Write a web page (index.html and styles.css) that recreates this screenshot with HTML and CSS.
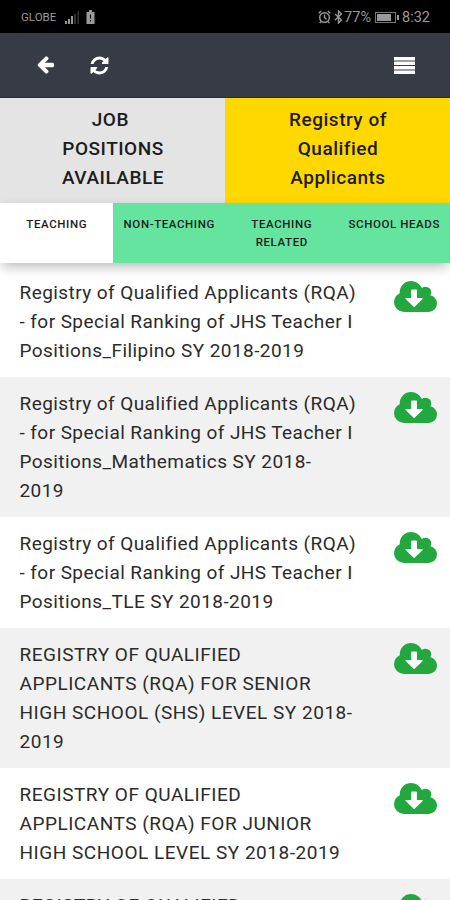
FILE: index.html
```html
<!DOCTYPE html>
<html lang="en">
  <head>
    <meta charset="UTF-8" />
    <meta name="viewport" content="width=device-width, initial-scale=1.0" />
    <title>Registry of Qualified Applicants</title>
    <link rel="stylesheet" href="styles.css">
  </head>
  <body>
    <svg class="symbols">
      <symbol id="cloud" viewBox="0 128 1920 1408" preserveAspectRatio="none">
        <path fill="#fff" d="M500 500h800v800H500z" />
        <path d="M1280 928q0-14-9-23t-23-9h-224v-352q0-13-9.5-22.5t-22.5-9.5h-192q-13 0-22.5 9.5t-9.5 22.5v352h-224q-13 0-22.5 9.5t-9.5 22.5q0 14 9 23l352 352q9 9 23 9t23-9l351-351q10-12 10-24zm640 224q0 159-112.5 271.5t-271.5 112.5h-1088q-185 0-316.5-131.5t-131.5-316.5q0-130 70-240t188-165q-2-30-2-43 0-212 150-362t362-150q156 0 285.5 87t188.5 231q71-62 166-62 106 0 181 75t75 181q0 76-41 138 130 31 213.5 135.5t83.5 238.5z" />
      </symbol>
    </svg>

    <div class="status-bar">
      <span class="carrier">GLOBE</span>
      <svg class="signal" width="15" height="13" viewBox="0 0 15 13">
        <path d="M0 10h2v3H0zM3 8h2v5H3zM6 5h2v8H6z" />
        <path class="dim" d="M9 3h2v10H9zM12.500 0h1.500v13h-1.500z" />
      </svg>
      <svg class="battery-small" width="9" height="14" viewBox="0 0 9 14">
        <path fill-rule="evenodd" d="M3 0h3v2h2.500v12h-8V2H3zM4 4.500v4h1v-4zM4 10v1.500h1V10z" />
      </svg>
      <div class="status-right">
        <svg class="line" width="13" height="14" viewBox="0 0 13 14">
          <circle cx="6.500" cy="7.500" r="4.800" />
          <path d="M6.500 4.500v3l2 2M.7 3.200L3.200 1M12.300 3.200L9.800 1M3 11.500l-1.300 1.500M10 11.500l1.300 1.500" />
        </svg>
        <svg class="line bluetooth" width="9" height="14" viewBox="0 0 9 14">
          <path d="M1 4l6.500 6-3 3V1l3 3L1 10" />
        </svg>
        <span class="percent">77%</span>
        <svg class="battery" width="24" height="11" viewBox="0 0 24 11">
          <rect class="frame" x=".5" y=".5" width="20" height="10" />
          <path d="M2 2h14v7H2zM22 3h2v5h-2z" />
        </svg>
        <span class="time">8:32</span>
      </div>
    </div>

    <div class="toolbar">
      <svg class="back" width="19" height="20" viewBox="64 64 1664 1792">
        <path d="M1664 896v128q0 53-32.500 90.500t-84.500 37.500h-704l293 294q38 36 38 90t-38 90l-75 76q-37 37-90 37-52 0-91-37l-651-652q-37-37-37-90 0-52 37-91l651-650q38-38 91-38 52 0 90 38l75 74q38 38 38 91t-38 91l-293 293h704q52 0 84.500 37.500t32.500 90.500z" />
      </svg>
      <svg class="refresh" width="21" height="21" viewBox="0 0 1792 1792">
        <path d="M1639 1056q0 5-1 7-64 268-268 434.500t-478 166.500q-146 0-282.500-55t-243.500-157l-129 129q-19 19-45 19t-45-19-19-45v-448q0-26 19-45t45-19h448q26 0 45 19t19 45-19 45l-137 137q71 66 161 102t187 36q134 0 250-65t186-179q11-17 53-117 8-23 30-23h192q13 0 22.500 9.500t9.500 22.500zm25-800v448q0 26-19 45t-45 19h-448q-26 0-45-19t-19-45 19-45l138-138q-148-137-349-137-134 0-250 65t-186 179q-11 17-53 117-8 23-30 23h-199q-13 0-22.500-9.500t-9.500-22.500v-7q65-268 270-434.500t480-166.500q146 0 284 55.500t245 156.500l130-129q19-19 45-19t45 19 19 45z" />
      </svg>
      <svg class="menu" width="21" height="17" viewBox="0 0 21 17">
        <path d="M0 0h21v3.500H0zM0 4.500h21V8H0zM0 9h21v3.500H0zM0 13.500h21V17H0z" />
      </svg>
    </div>

    <div class="main-tabs">
      <div class="main-tab">JOB&nbsp;<br>POSITIONS<br>AVAILABLE</div>
      <div class="main-tab active">Registry of<br>Qualified<br>Applicants</div>
    </div>

    <div class="sub-tabs">
      <div class="sub-tab active">TEACHING</div>
      <div class="sub-tab">NON-TEACHING</div>
      <div class="sub-tab">TEACHING<br>RELATED</div>
      <div class="sub-tab">SCHOOL HEADS</div>
    </div>

    <div class="list">
      <div class="item">
        <p>Registry of Qualified Applicants (RQA)<br>- for Special Ranking of JHS Teacher I<br>Positions_Filipino SY 2018-2019</p>
        <svg class="download"><use href="#cloud" /></svg>
      </div>
      <div class="item">
        <p>Registry of Qualified Applicants (RQA)<br>- for Special Ranking of JHS Teacher I<br>Positions_Mathematics SY 2018-<br>2019</p>
        <svg class="download"><use href="#cloud" /></svg>
      </div>
      <div class="item">
        <p>Registry of Qualified Applicants (RQA)<br>- for Special Ranking of JHS Teacher I<br>Positions_TLE SY 2018-2019</p>
        <svg class="download"><use href="#cloud" /></svg>
      </div>
      <div class="item upper">
        <p>REGISTRY OF QUALIFIED<br>APPLICANTS (RQA) FOR SENIOR<br>HIGH SCHOOL (SHS) LEVEL SY 2018-<br>2019</p>
        <svg class="download"><use href="#cloud" /></svg>
      </div>
      <div class="item upper">
        <p>REGISTRY OF QUALIFIED<br>APPLICANTS (RQA) FOR JUNIOR<br>HIGH SCHOOL LEVEL SY 2018-2019</p>
        <svg class="download"><use href="#cloud" /></svg>
      </div>
      <div class="item upper">
        <p>REGISTRY OF QUALIFIED</p>
        <svg class="download"><use href="#cloud" /></svg>
      </div>
    </div>
  </body>
</html>
```

FILE: styles.css
```css
* {
  box-sizing: border-box;
}
body {
  display: flex;
  flex-direction: column;
  height: 100vh;
  margin: 0;
  overflow: hidden;
  background-color: #fff;
  color: #1c1c1c;
  font-family: Roboto, sans-serif;
}
svg {
  display: block;
  flex-shrink: 0;
}
.symbols {
  display: none;
}
.status-bar {
  display: flex;
  flex-shrink: 0;
  align-items: center;
  height: 33px;
  padding: 1px 20px 0 21px;
  background-color: #000;
  color: #999;
  fill: #999;
}
.carrier {
  width: 44px;
  font-size: 11.5px;
}
.dim {
  fill: #333;
}
.battery-small {
  margin-left: 6px;
}
.status-right {
  display: flex;
  align-items: center;
  margin-left: auto;
  font-size: 14.5px;
}
.line {
  fill: none;
  stroke: #999;
  stroke-width: 1.4;
}
.bluetooth {
  margin-left: 3px;
}
.percent {
  margin-left: 1px;
}
.battery {
  margin: 0 3px 0 4px;
}
.frame {
  fill: none;
  stroke: #777;
}
.toolbar {
  display: flex;
  flex-shrink: 0;
  align-items: center;
  height: 65px;
  padding: 0 35px 0 36px;
  border-bottom: 1px solid #272b35;
  background-color: #363b45;
  fill: #fff;
}
.refresh {
  margin-left: 34px;
}
.menu {
  margin-left: auto;
}
.main-tabs {
  display: flex;
  flex-shrink: 0;
  height: 105px;
}
.main-tab {
  width: 50%;
  padding: 7px 0 0 1px;
  background-color: #e4e4e4;
  font-size: 19px;
  font-weight: 500;
  line-height: 29px;
  letter-spacing: 0.5px;
  text-align: center;
}
.main-tab.active {
  background-color: #ffd800;
}
.sub-tabs {
  position: relative;
  display: flex;
  flex-shrink: 0;
  height: 60px;
  box-shadow: 0 5px 12px -2px rgba(0, 0, 0, 0.3);
}
.sub-tab {
  width: 25%;
  padding: 12px 0 0 1px;
  background-color: #64e49e;
  font-size: 11.5px;
  font-weight: 500;
  line-height: 18px;
  letter-spacing: 0.6px;
  text-align: center;
  white-space: nowrap;
}
.sub-tab.active {
  background-color: #fff;
}
.list {
  padding-top: 3px;
}
.item {
  display: flex;
  justify-content: space-between;
  padding: 12px 13px 12px 19.5px;
}
.item:nth-child(even) {
  background-color: #f1f1f1;
}
.item p {
  margin: 0;
  color: #2b2b2b;
  font-size: 19px;
  line-height: 29px;
  letter-spacing: 0.43px;
  white-space: nowrap;
}
.item.upper p {
  letter-spacing: 0.52px;
}
.download {
  width: 43px;
  height: 31px;
  margin-top: 3px;
  fill: #23a83f;
}
```
